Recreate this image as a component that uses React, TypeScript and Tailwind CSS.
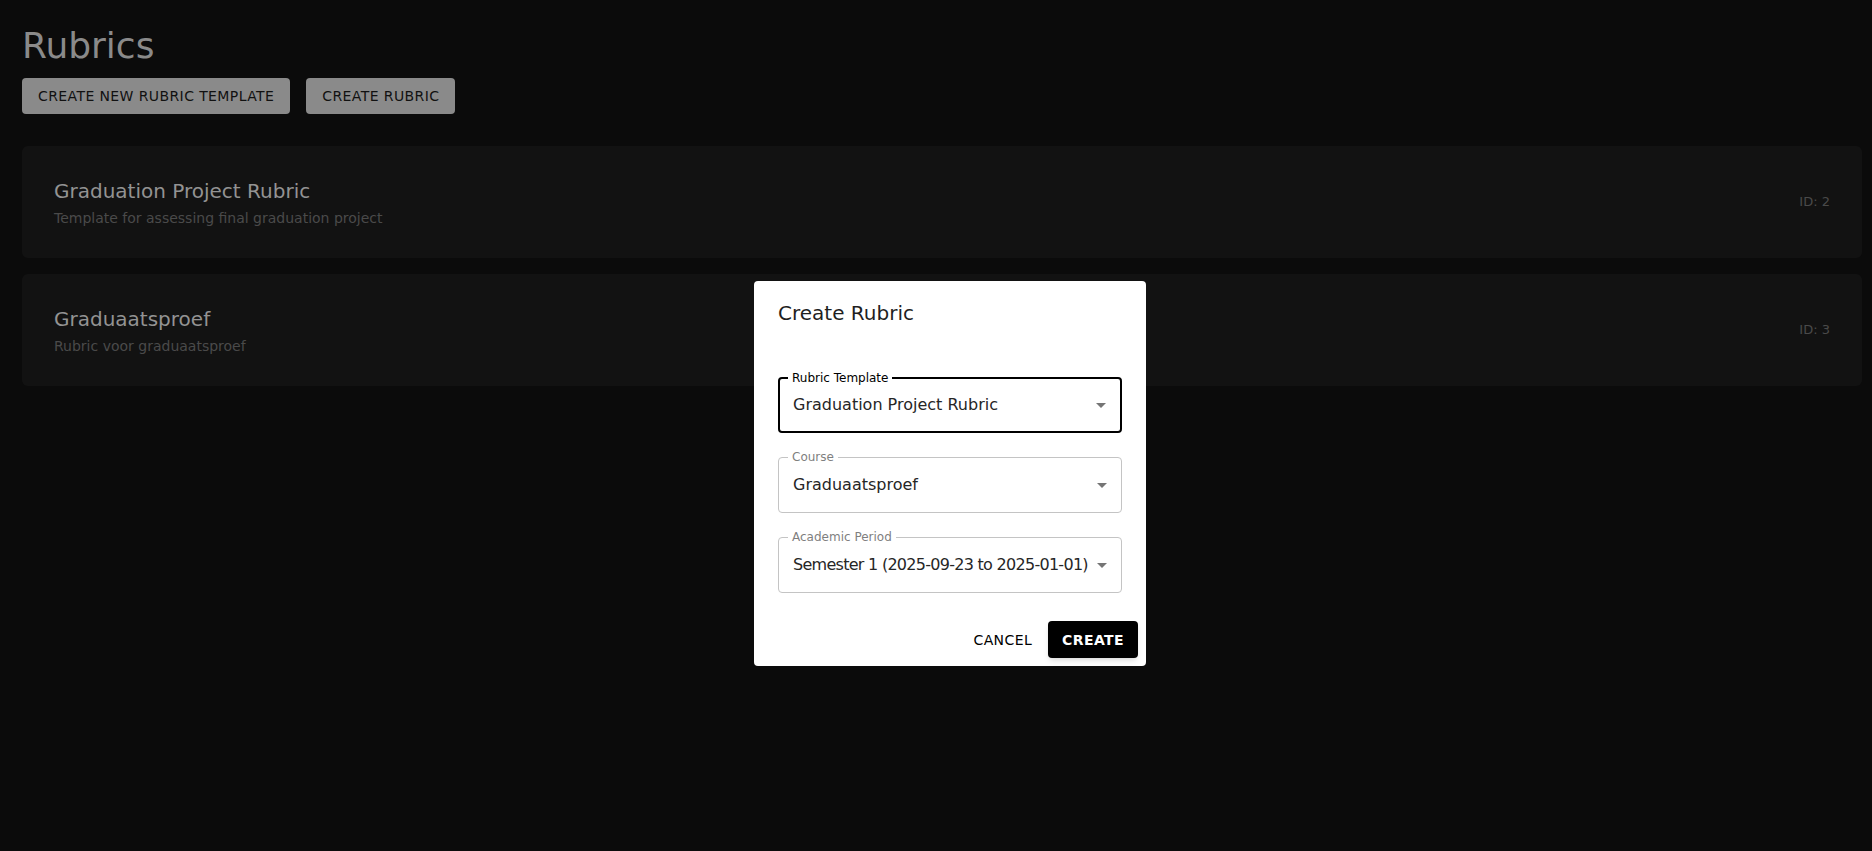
import React from 'react';

interface Rubric {
  id: number;
  name: string;
  description: string;
}

const rubrics: Rubric[] = [
  { id: 2, name: 'Graduation Project Rubric', description: 'Template for assessing final graduation project' },
  { id: 3, name: 'Graduaatsproef', description: 'Rubric voor graduaatsproef' },
];

function ArrowDrop() {
  return (
    <svg viewBox="0 0 24 24" className="absolute right-[7px] top-1/2 h-6 w-6 -translate-y-1/2 fill-[#757575]">
      <path d="M7 10l5 5 5-5z" />
    </svg>
  );
}

function SelectField({
  label,
  value,
  focused = false,
  tight = false,
}: {
  label: string;
  value: string;
  focused?: boolean;
  tight?: boolean;
}) {
  return (
    <div
      className={
        focused
          ? 'relative h-14 rounded border-2 border-black'
          : 'relative h-14 rounded border border-[#c4c4c4]'
      }
    >
      <span
        className={
          focused
            ? 'absolute -top-[9px] left-[8px] bg-white px-1 text-xs leading-4 text-black'
            : 'absolute -top-[9px] left-[9px] bg-white px-1 text-xs leading-4 text-[#7f7f7f]'
        }
      >
        {label}
      </span>
      <div
        className={
          focused
            ? 'flex h-full items-center pl-[13px] pr-7 text-base text-[#262626]'
            : 'flex h-full items-center pl-[14px] pr-7 text-base text-[#262626]'
        }
      >
        <span className={tight ? 'whitespace-nowrap tracking-[-0.045em]' : 'whitespace-nowrap'}>{value}</span>
      </div>
      <ArrowDrop />
    </div>
  );
}

export default function App() {
  return (
    <div className="relative min-h-screen bg-[#0b0b0b] font-['DejaVu_Sans','Noto_Sans',sans-serif]">
      <div className="pl-[22px] pr-[10px] pt-[28px]">
        <h1 className="text-[36px] leading-[36px] text-[#8a8a8a]">Rubrics</h1>

        <div className="mt-[14px] flex gap-4">
          <button className="h-9 rounded bg-[#8a8a8a] px-4 text-sm font-medium uppercase tracking-[0.02857em] text-[#111]">
            Create new rubric template
          </button>
          <button className="h-9 rounded bg-[#8a8a8a] px-4 text-sm font-medium uppercase tracking-[0.02857em] text-[#111]">
            Create rubric
          </button>
        </div>

        <div className="mt-8 flex flex-col gap-4">
          {rubrics.map((r) => (
            <div key={r.id} className="flex h-[112px] items-center justify-between rounded-md bg-[#121212] px-8">
              <div className="flex flex-col gap-[3px]">
                <span className="text-xl leading-7 text-[#939393]">{r.name}</span>
                <span className="text-sm leading-5 text-[#4a4a4a]">{r.description}</span>
              </div>
              <span className="text-[13px] text-[#4a4a4a]">ID: {r.id}</span>
            </div>
          ))}
        </div>
      </div>

      {/* Dialog */}
      <div className="absolute left-[754px] top-[281px] w-[392px] rounded bg-white">
        <div className="px-6 py-4 text-xl leading-8 font-medium text-[#1f1f1f]">Create Rubric</div>
        <div className="flex flex-col gap-6 px-6 pt-8 pb-5">
          <SelectField label="Rubric Template" value="Graduation Project Rubric" focused />
          <SelectField label="Course" value="Graduaatsproef" />
          <SelectField label="Academic Period" value="Semester 1 (2025-09-23 to 2025-01-01)" tight />
        </div>
        <div className="flex items-center justify-end gap-2 p-2">
          <button className="h-[37px] rounded px-2 text-sm font-medium uppercase tracking-[0.02857em] text-black">
            Cancel
          </button>
          <button className="h-[37px] rounded bg-black px-[14px] text-sm font-semibold uppercase tracking-[0.02857em] text-white shadow-md">
            Create
          </button>
        </div>
      </div>
    </div>
  );
}
